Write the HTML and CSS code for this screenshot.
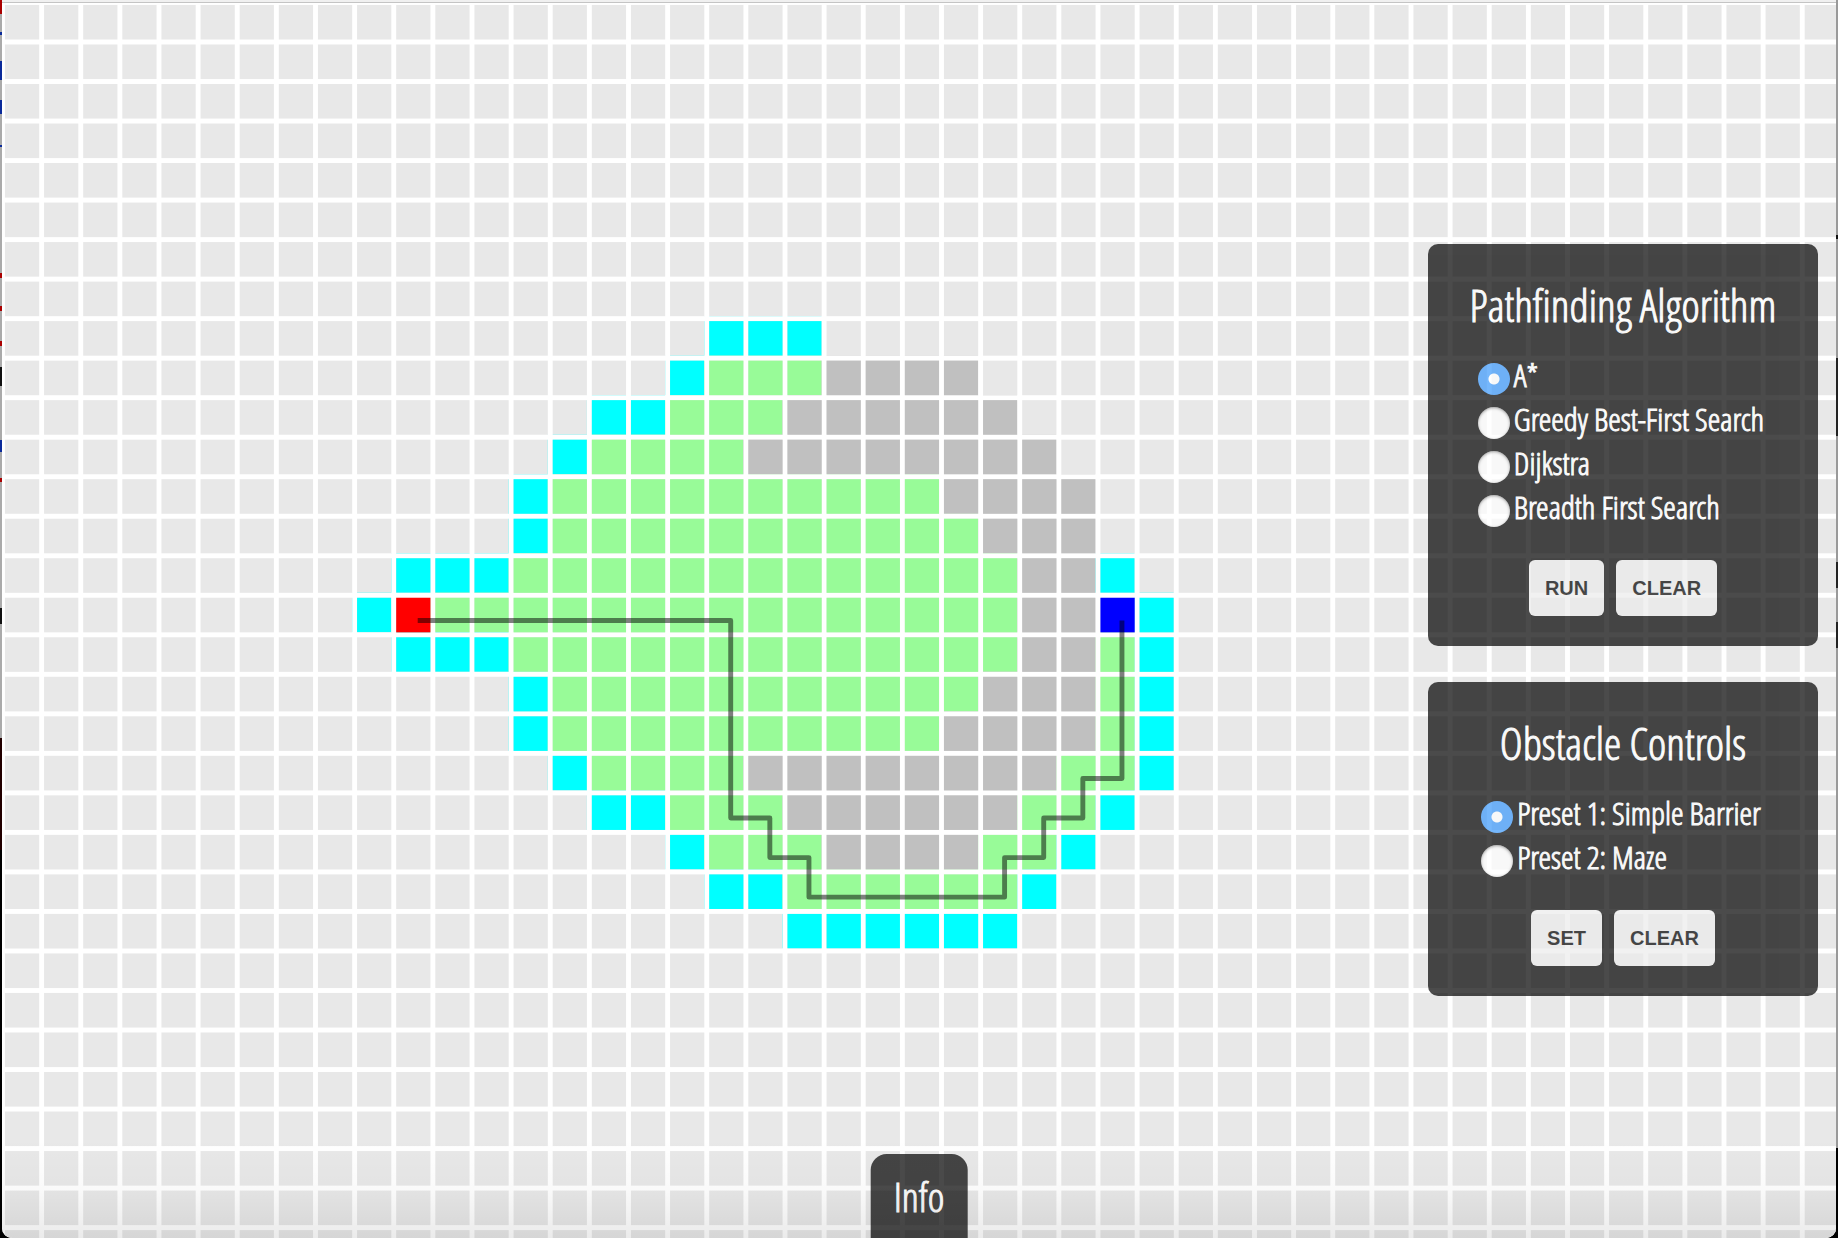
FILE: index.html
```html
<!DOCTYPE html>
<html lang="en">
<head>
<meta charset="utf-8">
<title>Pathfinding</title>
<link rel="stylesheet" href="styles.css">
</head>
<body>
<div class="window">
  <svg class="map" viewBox="2 0 1875 1253" preserveAspectRatio="none" aria-hidden="true">
    <defs>
      <pattern id="open" width="40" height="40" patternUnits="userSpaceOnUse"><rect class="open" x="5" y="5" width="35" height="35"/></pattern>
      <pattern id="frontier" width="40" height="40" patternUnits="userSpaceOnUse"><rect class="frontier" x="5" y="5" width="35" height="35"/></pattern>
      <pattern id="visited" width="40" height="40" patternUnits="userSpaceOnUse"><rect class="visited" x="5" y="5" width="35" height="35"/></pattern>
      <pattern id="wall" width="40" height="40" patternUnits="userSpaceOnUse"><rect class="wall" x="5" y="5" width="35" height="35"/></pattern>
    </defs>
    <rect width="1880" height="1280" fill="#fff"/>
    <rect width="1880" height="1280" fill="url(#open)"/>
    <!-- frontier: one subpath per run of cells -->
    <path fill="url(#frontier)" d="M720 320h120v40h-120zM680 360h40v40h-40zM600 400h80v40h-80zM560 440h40v40h-40zM520 480h40v80h-40zM400 560h120v40h-120zM1120 560h40v40h-40zM360 600h40v40h-40zM1160 600h40v200h-40zM400 640h120v40h-120zM520 680h40v80h-40zM560 760h40v40h-40zM600 800h80v40h-80zM1120 800h40v40h-40zM680 840h40v40h-40zM1080 840h40v40h-40zM720 880h80v40h-80zM1040 880h40v40h-40zM800 920h240v40h-240z"/>
    <!-- visited cells -->
    <path fill="url(#visited)" d="M720 360h120v40h-120zM680 400h120v40h-120zM600 440h160v40h-160zM560 480h400v40h-400zM560 520h440v40h-440zM520 560h520v40h-520zM440 600h600v40h-600zM520 640h520v40h-520zM1120 640h40v120h-40zM560 680h440v40h-440zM560 720h400v40h-400zM600 760h160v40h-160zM1080 760h80v40h-80zM680 800h120v40h-120zM1040 800h80v40h-80zM720 840h120v40h-120zM1000 840h80v40h-80zM800 880h240v40h-240z"/>
    <!-- barrier -->
    <path fill="url(#wall)" d="M840 360h160v40h-160zM800 400h240v40h-240zM760 440h320v40h-320zM960 480h160v40h-160zM1000 520h120v40h-120zM1040 560h80v120h-80zM1000 680h120v40h-120zM960 720h160v40h-160zM760 760h320v40h-320zM800 800h240v40h-240zM840 840h160v40h-160z"/>
    <rect class="start" x="405" y="605" width="35" height="35"/>
    <rect class="goal" x="1125" y="605" width="35" height="35"/>
    <path class="route" d="M427 628H747V828H787V868H827V908H1027V868H1067V828H1107V788H1147V628"/>
  </svg>

  <main class="controls">
    <form class="panel">
      <h2>Pathfinding Algorithm</h2>
      <div class="options">
        <label><input type="radio" name="algorithm" checked>A*</label>
        <label><input type="radio" name="algorithm">Greedy Best-First Search</label>
        <label><input type="radio" name="algorithm">Dijkstra</label>
        <label><input type="radio" name="algorithm">Breadth First Search</label>
      </div>
      <div class="actions"><button type="button">RUN</button><button type="button">CLEAR</button></div>
    </form>
    <form class="panel">
      <h2>Obstacle Controls</h2>
      <div class="options">
        <label><input type="radio" name="preset" checked>Preset 1: Simple Barrier</label>
        <label><input type="radio" name="preset">Preset 2: Maze</label>
      </div>
      <div class="actions"><button type="button">SET</button><button type="button">CLEAR</button></div>
    </form>
  </main>
  <button type="button" class="info">Info</button>
</div>
</body>
</html>
```
FILE: styles.css
```css
* { box-sizing: border-box; }

body {
  margin: 0;
  padding: 0 2px;
  min-height: 100vh;
  font-family: "Open Sans Condensed Light", "Open Sans Condensed", "Open Sans", sans-serif;
  background:
    linear-gradient(#a00 0 14px, #aaa 14px 32px, #0a2a9a 32px 35px, #aaa 35px 61px, #0a2a9a 61px 80px, #aaa 80px 100px, #0a2a9a 100px 114px, #aaa 114px 145px, #0a2a9a 145px 147px, #aaa 147px 273px, #a00 273px 278px, #aaa 278px 306px, #a00 306px 311px, #aaa 311px 341px, #a00 341px 346px, #aaa 346px 367px, #111 367px 386px, #aaa 386px 440px, #0a2a9a 440px 452px, #aaa 452px 478px, #a00 478px 482px, #aaa 482px 608px, #111 608px 624px, #aaa 624px 738px, #200 738px 850px, #000 850px) left / 50% 100% no-repeat,
    linear-gradient(#999 0 235px, #111 235px 239px, #999 239px 358px, #222 358px 436px, #999 436px 562px, #222 562px 588px, #999 588px 622px, #222 622px 648px, #999 648px 1148px, #000 1148px) right / 50% 100% no-repeat;
}

.window {
  position: relative;
  min-height: 100vh;
  padding: 2px 18px 0;
  display: grid;
  align-items: center;
  justify-items: end;
  overflow: hidden;
  border-radius: 0 0 10px 10px;
  background: #fff;
}

.window::before {
  content: "";
  position: absolute;
  z-index: 1;
  inset: 0 0 auto;
  height: 2px;
  background: #f0f0f0;
  border-bottom: 1px solid #c4c4c4;
}

/* shade along the bottom edge, over everything */
.window::after {
  content: "";
  position: absolute;
  z-index: 3;
  inset: auto 0 0;
  height: 100px;
  background: linear-gradient(transparent, rgba(0, 0, 0, .02) 50%, rgba(0, 0, 0, .08));
  pointer-events: none;
}

.map {
  position: absolute;
  inset: 0;
  width: 100%;
  height: 100%;
}

.open { fill: #e8e8e8; }
.frontier { fill: #0ff; }
.visited { fill: #98fb98; }
.wall { fill: #c0c0c0; }
.start { fill: #f00; }
.goal { fill: #00f; }

.route {
  fill: none;
  stroke: #000;
  stroke-opacity: .5;
  stroke-width: 5;
  stroke-linejoin: round;
}

.controls {
  position: relative;
  display: grid;
  gap: 36px;
  padding: 36px 0;
}

.panel {
  width: 390px;
  padding: 31px 16px 30px;
  display: flex;
  flex-direction: column;
  align-items: center;
  border-radius: 10px;
  background: #000;
  color: #fff;
  opacity: .7;
}

h2 {
  margin: 0 0 18px;
  font-size: 44px;
  font-weight: 400;
  line-height: 60px;
  -webkit-text-stroke: 1px #fff;
}

.options {
  display: grid;
  margin-bottom: 31px;
  padding-right: 4px;
}

.options label {
  display: flex;
  gap: 4px;
  align-items: flex-end;
  font-size: 32px;
  line-height: 44px;
  -webkit-text-stroke: 1px #fff;
}

.options input {
  appearance: none;
  flex: none;
  width: 32px;
  height: 32px;
  margin: 0 0 2px;
  border-radius: 50%;
  background: #fff;
  box-shadow: inset 0 1px 3px rgba(0, 0, 0, .5);
}

.options input:checked {
  background: radial-gradient(circle, #fff 5px, #3b99fc 6px);
  box-shadow: none;
}

.actions {
  display: flex;
  gap: 12px;
}

.actions button {
  height: 56px;
  padding: 0 16px;
  border: 0;
  border-radius: 6px;
  background: #ececec;
  color: #000;
  font: bold 20px "Liberation Sans", Arial, sans-serif;
}

.info {
  position: absolute;
  z-index: 2;
  bottom: 0;
  left: 50%;
  transform: translateX(-50%);
  height: 84px;
  padding: 2px 23px 0;
  border: 0;
  border-radius: 16px 16px 0 0;
  background: #000;
  color: #fff;
  font: 40px/54px "Open Sans Condensed Light", "Open Sans Condensed", "Open Sans", sans-serif;
  -webkit-text-stroke: 1px #fff;
  opacity: .7;
}
```
